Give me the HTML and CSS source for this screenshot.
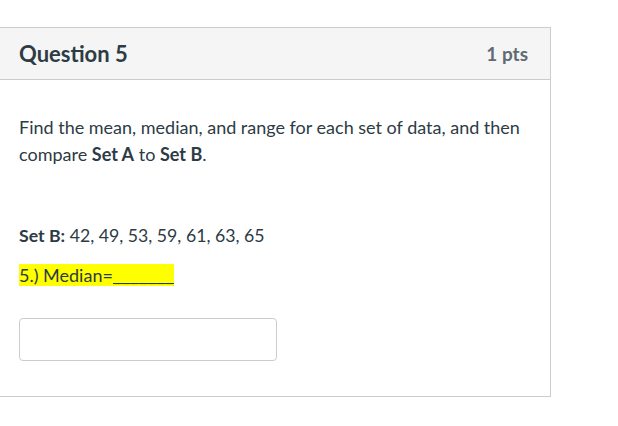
FILE: index.html
```html
<!DOCTYPE html>
<html>
<head>
<meta charset="utf-8">
<link rel="stylesheet" href="styles.css">
</head>
<body>
<div class="question">
  <div class="header">
    <h2 class="title">Question 5</h2>
    <span class="points">1 pts</span>
  </div>
  <div class="content">
    <p class="intro">Find the mean, median, and range for each set of data, and then compare <b>Set A</b> to <b>Set B</b>.</p>
    <p class="set"><b>Set B:</b> 42, 49, 53, 59, 61, 63, 65</p>
    <p class="prompt"><span class="hl">5.) Median=<span class="blank">_______</span></span></p>
    <input class="answer" type="text">
  </div>
</div>
</body>
</html>
```
FILE: styles.css
```css
html, body {
  margin: 0;
  padding: 0;
  background: #ffffff;
}
body {
  font-family: Lato, "Noto Sans", sans-serif;
  color: #2d3b45;
}
.question {
  margin-top: 27px;
  width: 550px;
  border: 1px solid #c7cdd1;
  border-left: none;
}
.header {
  background: #f5f5f5;
  border-bottom: 1px solid #c7cdd1;
  height: 51px;
  display: flex;
  align-items: center;
  justify-content: space-between;
  padding: 0 22px 0 19px;
}
.title {
  margin: 0;
  font-size: 22px;
  font-weight: 700;
  color: #2d3b45;
}
.points {
  font-size: 19px;
  font-weight: 700;
  color: #5f6a72;
}
.content {
  padding: 34px 19px 35px 19px;
  font-size: 18px;
  line-height: 27px;
}
.content p {
  margin: 0;
}
.intro {
  margin-bottom: 54px !important;
}
.set {
  margin-bottom: 13px !important;
  font-size: 17.7px;
}
.hl {
  background: #ffff00;
}
.blank {
  display: inline-block;
  line-height: 22px;
  letter-spacing: 0.5px;
  background-image: linear-gradient(#2d3b45, #2d3b45);
  background-repeat: no-repeat;
  background-size: 100% 1px;
  background-position: 0 19px;
}
.answer {
  display: block;
  margin-top: 29px;
  width: 258px;
  height: 43px;
  box-sizing: border-box;
  border: 1px solid #c7cdd1;
  border-radius: 4px;
  background: #fff;
}
```
